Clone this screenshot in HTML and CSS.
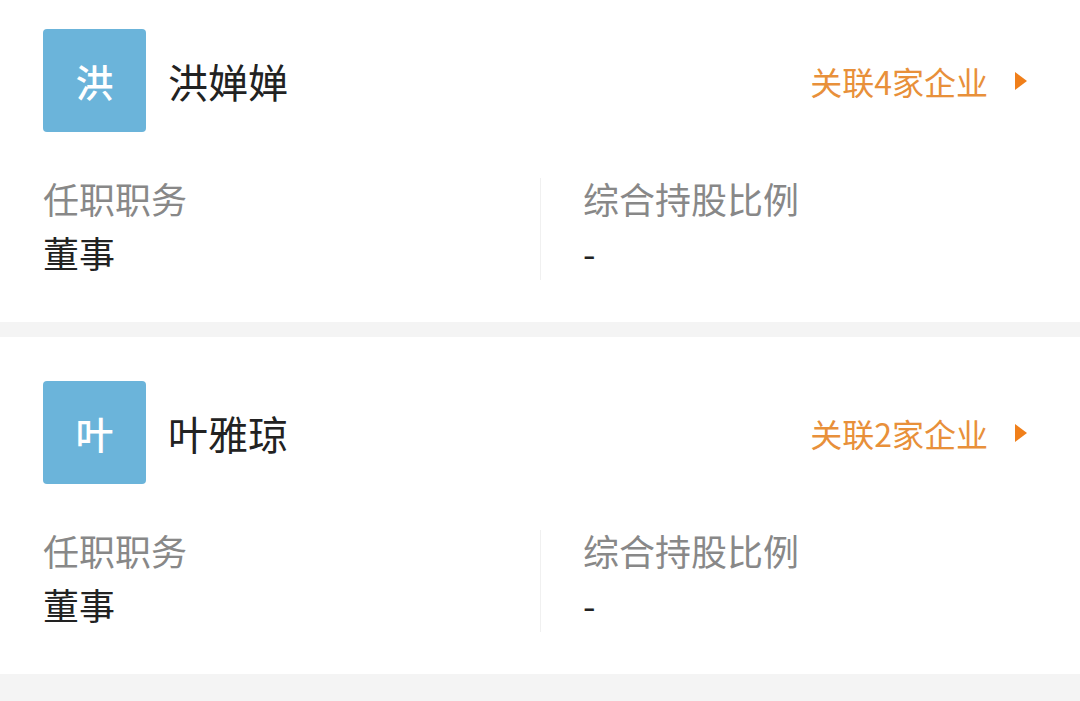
FILE: index.html
```html
<!DOCTYPE html>
<html lang="zh-CN">
<head>
    <meta charset="UTF-8">
    <meta name="viewport" content="width=device-width, initial-scale=1.0">
    <title>主要人员</title>
    <link rel="stylesheet" href="styles.css">
</head>
<body>
    <div class="list">
        <div class="card">
            <div class="card-head">
                <div class="avatar">洪</div>
                <div class="name">洪婵婵</div>
                <a class="related" href="#">关联4家企业<span class="arrow"></span></a>
            </div>
            <div class="info">
                <div class="info-col">
                    <div class="label">任职职务</div>
                    <div class="value">董事</div>
                </div>
                <div class="info-col">
                    <div class="label">综合持股比例</div>
                    <div class="value">-</div>
                </div>
            </div>
        </div>

        <div class="card">
            <div class="card-head">
                <div class="avatar">叶</div>
                <div class="name">叶雅琼</div>
                <a class="related" href="#">关联2家企业<span class="arrow"></span></a>
            </div>
            <div class="info">
                <div class="info-col">
                    <div class="label">任职职务</div>
                    <div class="value">董事</div>
                </div>
                <div class="info-col">
                    <div class="label">综合持股比例</div>
                    <div class="value">-</div>
                </div>
            </div>
        </div>
    </div>
</body>
</html>
```

FILE: styles.css
```css
body {
    margin: 0;
    padding: 0;
    background: #f4f4f4;
    font-family: "Noto Sans CJK SC", "Noto Sans", sans-serif;
    overflow: hidden;
}

.list {
    margin-top: -15px;
}

.card {
    background: #fff;
    padding: 44px 53px 42px 43px;
    margin-bottom: 15px;
}

.card-head {
    display: flex;
    align-items: center;
    height: 103px;
}

.avatar {
    width: 103px;
    height: 103px;
    border-radius: 4px;
    background: #6bb4da;
    color: #fff;
    font-size: 38px;
    font-weight: 500;
    display: flex;
    align-items: center;
    justify-content: center;
}

.name {
    margin-left: 22px;
    font-size: 40px;
    color: #222;
    flex: 1;
}

.related {
    color: #e8903a;
    font-size: 32px;
    text-decoration: none;
    display: flex;
    align-items: center;
}

.arrow {
    width: 0;
    height: 0;
    margin-left: 27px;
    border-top: 9px solid transparent;
    border-bottom: 9px solid transparent;
    border-left: 12px solid #f07f1a;
}

.info {
    display: grid;
    grid-template-columns: 497px 1fr;
    margin-top: 46px;
    margin-right: -10px;
}

.info-col {
    height: 102px;
}

.info-col + .info-col {
    border-left: 1px solid #f0f0f0;
    padding-left: 42px;
}

.label {
    font-size: 36px;
    line-height: 40px;
    color: #888;
}

.value {
    font-size: 36px;
    line-height: 40px;
    color: #222;
    margin-top: 14px;
}
```
